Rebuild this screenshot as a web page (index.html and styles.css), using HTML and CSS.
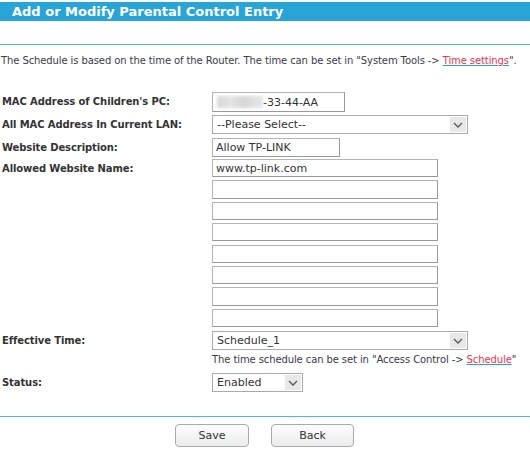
FILE: index.html
```html
<!DOCTYPE html>
<html>
<head>
<meta charset="utf-8">
<link rel="stylesheet" href="styles.css">
</head>
<body>
<div class="page">
  <div class="title-bar"><span class="title">Add or Modify Parental Control Entry</span></div>
  <div class="rule top-rule"></div>
  <p class="intro">The Schedule is based on the time of the Router. The time can be set in "System Tools -&gt; <a class="link" href="#">Time settings</a>".</p>

  <div class="form">
    <div class="row row-mac">
      <div class="label">MAC Address of Children's PC:</div>
      <div class="field"><div class="input mac"><span class="blur"></span><span>-33-44-AA</span></div></div>
    </div>
    <div class="row row-all">
      <div class="label">All MAC Address In Current LAN:</div>
      <div class="field">
        <div class="select wide"><span class="sel-text">--Please Select--</span><span class="arrow"><svg width="10" height="6" viewBox="0 0 10 6"><path d="M1 1 L5 5 L9 1" fill="none" stroke="#555" stroke-width="1.3"/></svg></span></div>
      </div>
    </div>
    <div class="row row-desc">
      <div class="label">Website Description:</div>
      <div class="field"><div class="input desc">Allow TP-LINK</div></div>
    </div>
    <div class="row row-sites">
      <div class="label">Allowed Website Name:</div>
      <div class="field sites">
        <div class="input site">www.tp-link.com</div>
        <div class="input site"></div>
        <div class="input site"></div>
        <div class="input site"></div>
        <div class="input site"></div>
        <div class="input site"></div>
        <div class="input site"></div>
        <div class="input site"></div>
      </div>
    </div>
    <div class="row row-eff">
      <div class="label">Effective Time:</div>
      <div class="field">
        <div class="select wide"><span class="sel-text">Schedule_1</span><span class="arrow"><svg width="10" height="6" viewBox="0 0 10 6"><path d="M1 1 L5 5 L9 1" fill="none" stroke="#555" stroke-width="1.3"/></svg></span></div>
        <div class="note">The time schedule can be set in "Access Control -&gt; <a class="link" href="#">Schedule</a>"</div>
      </div>
    </div>
    <div class="row row-status">
      <div class="label">Status:</div>
      <div class="field">
        <div class="select small"><span class="sel-text">Enabled</span><span class="arrow"><svg width="10" height="6" viewBox="0 0 10 6"><path d="M1 1 L5 5 L9 1" fill="none" stroke="#555" stroke-width="1.3"/></svg></span></div>
      </div>
    </div>
  </div>

  <div class="rule bottom-rule"></div>
  <div class="buttons">
    <button class="btn save">Save</button>
    <button class="btn back">Back</button>
  </div>
</div>
</body>
</html>
```

FILE: styles.css
```css
html, body {
  margin: 0;
  padding: 0;
  background: #fff;
}
body {
  font-family: "DejaVu Sans", Verdana, sans-serif;
  font-size: 11px;
  color: #333;
}
.page {
  width: 530px;
  padding-top: 2px;
}
.title-bar {
  height: 19px;
  background: #28a4d6;
  display: flex;
  align-items: center;
  padding-left: 12px;
}
.title {
  color: #fff;
  font-weight: bold;
  font-size: 13px;
}
.rule {
  height: 1px;
  background: #4fb6e0;
}
.top-rule {
  margin-top: 23px;
}
.intro {
  margin: 8px 0 0 1px;
  line-height: 16px;
  color: #3a3a4a;
  font-size: 10px;
  letter-spacing: -0.1px;
}
.link {
  color: #e8334f;
  text-decoration: underline;
  text-decoration-color: #2a9fd0;
}
.form {
  display: flex;
  flex-direction: column;
  margin-top: 23px;
  padding-left: 2px;
}
.row {
  display: flex;
}
.label {
  width: 210px;
  font-weight: bold;
  color: #333;
  font-size: 10px;
  line-height: 19px;
  letter-spacing: -0.1px;
}
.field {
  display: flex;
  flex-direction: column;
}
.input {
  box-sizing: border-box;
  height: 19px;
  border: 1px solid #b4b4b4;
  border-bottom-color: #999;
  border-right-color: #999;
  padding: 0 3px;
  line-height: 17px;
  font-size: 11px;
  color: #333;
  display: flex;
  align-items: center;
}
.mac {
  width: 133px;
  height: 20px;
}
.blur {
  display: inline-block;
  width: 46px;
  height: 12px;
  background: linear-gradient(90deg, #d8d8d8, #e4e4e4 30%, #d6d6d6 60%, #e8e8e8);
  filter: blur(1.5px);
  margin-left: 1px;
}
.row-all {
  margin-top: 3px;
}
.row-desc {
  margin-top: 4px;
}
.desc {
  width: 128px;
}
.row-sites {
  margin-top: 2px;
}
.sites {
  gap: 3.1px;
}
.site {
  width: 226px;
  height: 18.3px;
}
.select {
  position: relative;
  box-sizing: border-box;
  height: 19px;
  border: 1px solid #aaa;
  background: #fff;
  display: flex;
  align-items: center;
  padding-left: 4px;
  font-size: 11px;
  color: #333;
}
.wide {
  width: 256px;
}
.small {
  width: 91px;
}
.arrow {
  position: absolute;
  right: 1px;
  top: 1px;
  bottom: 1px;
  width: 16px;
  background: #e8e8e8;
  display: flex;
  align-items: center;
  justify-content: center;
}
.row-eff {
  margin-top: 4px;
}
.note {
  margin-top: 3px;
  line-height: 14px;
  font-size: 10px;
  color: #3a3a4a;
  letter-spacing: -0.1px;
}
.row-status {
  margin-top: 6px;
}
.bottom-rule {
  margin-top: 24px;
}
.buttons {
  display: flex;
  gap: 22px;
  padding-left: 175px;
  margin-top: 7px;
}
.btn {
  box-sizing: border-box;
  height: 23px;
  border: 1px solid #aaa;
  border-radius: 4px;
  background: linear-gradient(#fdfdfd, #ececec);
  font-family: "DejaVu Sans", Verdana, sans-serif;
  font-size: 11px;
  color: #333;
}
.save {
  width: 74px;
}
.back {
  width: 83px;
}
```
